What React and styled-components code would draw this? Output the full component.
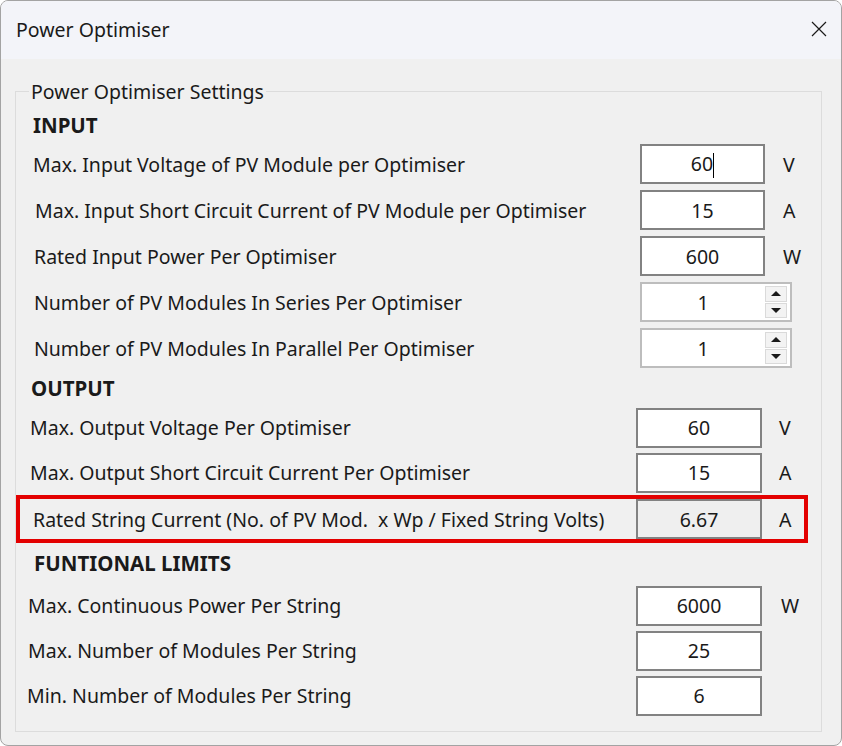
import styled, { createGlobalStyle } from 'styled-components'

const GlobalStyle = createGlobalStyle`
  html, body {
    margin: 0;
    padding: 0;
    background: #ffffff;
  }
  body {
    font-family: "Noto Sans", "Open Sans", sans-serif;
    color: #1a1a1a;
  }
`

const Window = styled.div`
  width: 842px;
  height: 746px;
  box-sizing: border-box;
  border: 1px solid #a3a3a3;
  border-radius: 8px;
  overflow: hidden;
  background: #f0f0f0;
  display: flex;
  flex-direction: column;
`

const TitleBar = styled.div`
  height: 56px;
  flex: none;
  background: #f3f4f9;
  display: flex;
  align-items: center;
  justify-content: space-between;
  padding: 0 14px 2px 15px;
`

const Title = styled.span`
  font-size: 19.5px;
`

const CloseButton = styled.div`
  width: 16px;
  height: 16px;
  display: flex;
`

const Body = styled.div`
  flex: 1;
  padding: 19px 19px 13px 14px;
  display: flex;
`

const Group = styled.fieldset`
  flex: 1;
  margin: 0;
  padding: 4px 4px 9px 4px;
  border: 1px solid #dcdcdc;
  min-width: 0;
`

const Legend = styled.legend`
  margin-left: 9px;
  padding: 0 2px;
  font-size: 19.5px;
`

const Heading = styled.div`
  height: ${p => p.$h}px;
  display: flex;
  align-items: center;
  padding-left: ${p => p.$indent}px;
  font-size: 20.5px;
  font-weight: 700;
`

const Row = styled.div`
  display: grid;
  grid-template-columns: ${p => p.$labelCol}px ${p => p.$fieldW}px 1fr;
  align-items: center;
  height: ${p => p.$h}px;
`

const RatedRow = styled(Row)`
  box-sizing: border-box;
  width: 792px;
  margin-left: -4px;
  border: 4px solid #e30000;
`

const Label = styled.span`
  padding-left: ${p => p.$indent}px;
  font-size: 19.5px;
  white-space: nowrap;
`

const Field = styled.div`
  box-sizing: border-box;
  height: 40px;
  border: 2px solid ${p => (p.$spin ? '#bdbdbd' : '#828282')};
  background: ${p => (p.$readOnly ? '#efefef' : '#ffffff')};
  display: flex;
  align-items: center;
  font-size: 19.5px;
  position: relative;
`

const FieldText = styled.span`
  flex: 1;
  text-align: center;
  padding-right: ${p => (p.$spin ? '26px' : '0')};
`

const Caret = styled.span`
  display: inline-block;
  width: 1px;
  height: 25px;
  background: #000;
  vertical-align: middle;
`

const SpinButtons = styled.div`
  position: absolute;
  right: 3px;
  top: 2px;
  bottom: 2px;
  width: 22px;
  display: flex;
  flex-direction: column;
  gap: 1px;
`

const SpinButton = styled.div`
  flex: 1;
  background: #f3f3f3;
  border: 1px solid #dadada;
  display: flex;
  align-items: center;
  justify-content: center;
`

const Arrow = styled.span`
  width: 0;
  height: 0;
  border-left: 5px solid transparent;
  border-right: 5px solid transparent;
  ${p => (p.$down ? 'border-top: 5px solid #1a1a1a;' : 'border-bottom: 5px solid #1a1a1a;')}
`

const Unit = styled.span`
  padding-left: ${p => p.$indent}px;
  font-size: 19.5px;
`

const inputRows = [
  { label: 'Max. Input Voltage of PV Module per Optimiser', value: '60', unit: 'V', caret: true, indent: 13 },
  { label: 'Max. Input Short Circuit Current of PV Module per Optimiser', value: '15', unit: 'A', indent: 15 },
  { label: 'Rated Input Power Per Optimiser', value: '600', unit: 'W', indent: 14 },
  { label: 'Number of PV Modules In Series Per Optimiser', value: '1', spin: true, indent: 14 },
  { label: 'Number of PV Modules In Parallel Per Optimiser', value: '1', spin: true, indent: 14 },
]

const outputRows = [
  { label: 'Max. Output Voltage Per Optimiser', value: '60', unit: 'V', indent: 10 },
  { label: 'Max. Output Short Circuit Current Per Optimiser', value: '15', unit: 'A', indent: 10 },
]

const limitRows = [
  { label: 'Max. Continuous Power Per String', value: '6000', unit: 'W', indent: 8 },
  { label: 'Max. Number of Modules Per String', value: '25', indent: 8 },
  { label: 'Min. Number of Modules Per String', value: '6', indent: 7 },
]

function InputBox({ value, caret, spin, readOnly }) {
  return (
    <Field $spin={spin} $readOnly={readOnly}>
      <FieldText $spin={spin}>
        {value}
        {caret && <Caret />}
      </FieldText>
      {spin && (
        <SpinButtons>
          <SpinButton><Arrow /></SpinButton>
          <SpinButton><Arrow $down /></SpinButton>
        </SpinButtons>
      )}
    </Field>
  )
}

function App() {
  return (
    <>
      <GlobalStyle />
      <Window>
        <TitleBar>
          <Title>Power Optimiser</Title>
          <CloseButton>
            <svg width="16" height="16" viewBox="0 0 16 16">
              <path d="M1 1 L15 15 M15 1 L1 15" stroke="#1a1a1a" strokeWidth="1.2" />
            </svg>
          </CloseButton>
        </TitleBar>
        <Body>
          <Group>
            <Legend>Power Optimiser Settings</Legend>

            <Heading $h={32} $indent={13}>INPUT</Heading>
            {inputRows.map(r => (
              <Row key={r.label} $labelCol={620} $fieldW={r.spin ? 152 : 125} $h={46}>
                <Label $indent={r.indent}>{r.label}</Label>
                <InputBox value={r.value} caret={r.caret} spin={r.spin} />
                {r.unit && <Unit $indent={18}>{r.unit}</Unit>}
              </Row>
            ))}

            <Heading $h={34} $indent={11}>OUTPUT</Heading>
            {outputRows.map(r => (
              <Row key={r.label} $labelCol={616} $fieldW={126} $h={45}>
                <Label $indent={r.indent}>{r.label}</Label>
                <InputBox value={r.value} />
                <Unit $indent={17}>{r.unit}</Unit>
              </Row>
            ))}
            <RatedRow $labelCol={616} $fieldW={126} $h={48}>
              <Label $indent={13}>Rated String Current (No. of PV Mod.&nbsp; x Wp / Fixed String Volts)</Label>
              <InputBox value="6.67" readOnly />
              <Unit $indent={17}>A</Unit>
            </RatedRow>

            <Heading $h={40} $indent={14}>FUNTIONAL LIMITS</Heading>
            {limitRows.map(r => (
              <Row key={r.label} $labelCol={616} $fieldW={126} $h={45}>
                <Label $indent={r.indent}>{r.label}</Label>
                <InputBox value={r.value} />
                {r.unit && <Unit $indent={19}>{r.unit}</Unit>}
              </Row>
            ))}
          </Group>
        </Body>
      </Window>
    </>
  )
}

export default App
